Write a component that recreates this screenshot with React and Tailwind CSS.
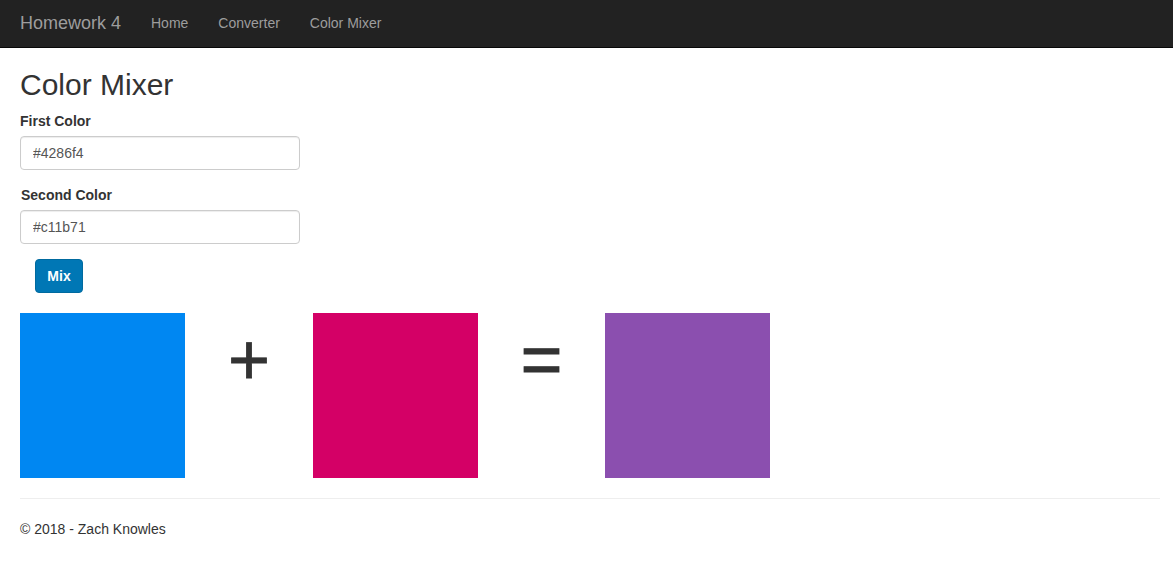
const NAV_LINKS = ["Home", "Converter", "Color Mixer"];

const ColorBox = ({ color }) => (
  <div className="w-[165px] h-[165px] shrink-0" style={{ backgroundColor: color }} />
);

const Operator = ({ symbol, className = "" }) => (
  <div className={`shrink-0 flex justify-center ${className}`}>
    <span className="text-[72px] leading-[92px] text-[#333] [-webkit-text-stroke:0.8px_#333]">
      {symbol}
    </span>
  </div>
);

const Field = ({ label, value, className = "" }) => (
  <div className={`mb-[15px] ${className}`}>
    <label className="block text-[14px] leading-[20px] font-bold text-[#333] mb-[5px]">
      {label}
    </label>
    <input
      type="text"
      defaultValue={value}
      className="block w-[280px] h-[34px] px-[12px] text-[14px] text-[#555] bg-white border border-[#ccc] rounded-[4px] shadow-[inset_0_1px_1px_rgba(0,0,0,0.075)] outline-none"
    />
  </div>
);

export default function App() {
  return (
    <div className="min-h-screen bg-white font-['Liberation_Sans',Arial,sans-serif] text-[14px] text-[#333]">
      <nav className="h-[48px] bg-[#222] border-b border-[#080808] flex items-center">
        <a className="pl-[20px] w-[136px] text-[18px] text-[#9d9d9d]">Homework 4</a>
        <ul className="flex">
          {NAV_LINKS.map((link) => (
            <li key={link}>
              <a className="px-[15px] text-[14px] text-[#9d9d9d]">{link}</a>
            </li>
          ))}
        </ul>
      </nav>

      <main className="px-[20px]">
        <h2 className="mt-[20px] mb-[10px] text-[30px] leading-[33px] font-normal">Color Mixer</h2>

        <Field label="First Color" value="#4286f4" />
        <Field label="Second Color" value="#c11b71" className="pl-[1px] [&_input]:-ml-[1px]" />

        <div className="pl-[15px]">
          <button className="w-[48px] h-[34px] text-[14px] font-bold text-white bg-[#0077b5] border border-[#006a9f] rounded-[4px]">
            Mix
          </button>
        </div>

        <div className="mt-[20px] flex">
          <ColorBox color="#0087f2" />
          <Operator symbol="+" className="w-[128px]" />
          <ColorBox color="#d40066" />
          <Operator symbol="=" className="w-[127px]" />
          <ColorBox color="#8b4faf" />
        </div>

        <hr className="mt-[20px] mb-[20px] mr-[-7px] border-0 border-t border-[#eee]" />

        <footer>
          <p className="leading-[20px]">© 2018 - Zach Knowles</p>
        </footer>
      </main>
    </div>
  );
}
